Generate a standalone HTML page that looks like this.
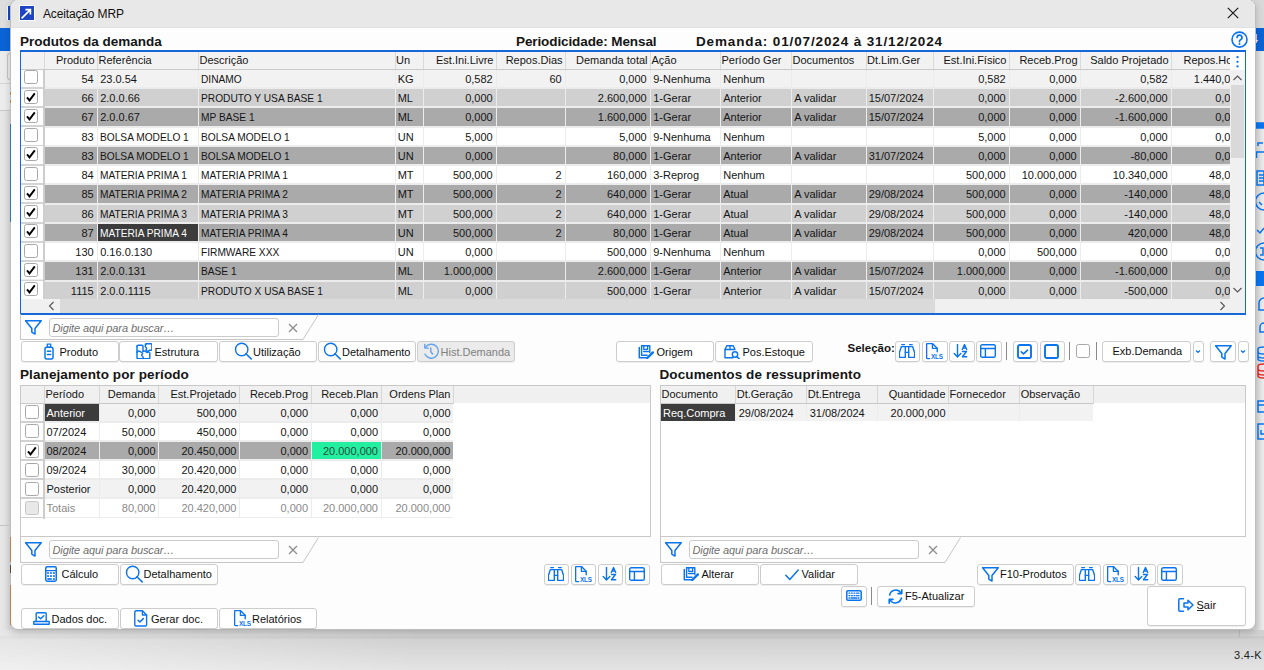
<!DOCTYPE html><html><head><meta charset="utf-8"><style>
html,body{margin:0;padding:0;width:1264px;height:670px;overflow:hidden;background:#e4e4e4;}
body{position:relative;font-family:"Liberation Sans",sans-serif;font-size:11px;color:#151515;}
div{position:absolute;box-sizing:border-box;}
.tx{white-space:nowrap;font-size:11px;}
.btn{border:1px solid #cdcdcd;border-radius:3px;box-shadow:0 1px 0 rgba(0,0,0,0.06);}
.hd{font-weight:bold;font-size:13.5px;color:#151515;letter-spacing:0.1px;}
.cell{height:17px;line-height:17px;white-space:nowrap;overflow:hidden;font-size:11px;}
.r{text-align:right;}
.cap span{display:inline-block;transform:scaleX(0.925);transform-origin:0 50%;}
.chk{width:14px;height:14px;border:1.3px solid #a8a8a8;border-radius:2.5px;background:#fff;}
</style></head><body>
<div style="left:0px;top:0px;width:1264px;height:670px;background:linear-gradient(#dadada 0,#e2e2e2 628px,#d0d0d0 630px,#d2d2d2 636px,#c4c4c4 637px,#d0d0d0 639px,#e4e4e4 670px);"></div>
<div style="left:1239px;top:630px;width:1px;height:7px;background:#bdbdbd;"></div>
<div style="left:0px;top:629px;width:420px;height:41px;background:linear-gradient(90deg,rgba(255,255,255,.45),rgba(255,255,255,0));"></div>
<div style="left:0px;top:0px;width:11px;height:28px;background:#dedede;"></div>
<div style="left:7px;top:6px;width:5px;height:14px;background:#1a46c2;border-left:1px solid #fff;"></div>
<div style="left:0px;top:28px;width:11px;height:23px;background:#0b64d6;"></div>
<div style="left:0px;top:51px;width:11px;height:60px;background:#ececec;"></div>
<div style="left:7px;top:53px;width:5px;height:27px;border:1px solid #c4c4c4;border-right:none;border-radius:3px 0 0 3px;"></div>
<div style="left:0px;top:83px;width:11px;height:1px;background:#d4d4d4;"></div>
<div style="left:0px;top:110px;width:11px;height:1px;background:#c8c8c8;"></div>
<div style="left:0px;top:111px;width:11px;height:519px;background:linear-gradient(90deg,#e8e8e8,#dcdcdc);"></div>
<div style="left:1255px;top:0px;width:9px;height:28px;background:#d8d8d8;"></div>
<div style="left:1255px;top:28px;width:9px;height:23px;background:#0b64d6;"></div>
<div style="left:1255px;top:28px;width:9px;height:23px;overflow:hidden;"><div class="tx" style="left:-4px;top:3px;height:17px;line-height:17px;color:#fff;font-size:12px;font-weight:bold;">4</div></div>
<div style="left:1255px;top:51px;width:9px;height:579px;background:linear-gradient(90deg,#d4d4d4,#ececec);"></div>
<svg style="position:absolute;left:1255px;top:118px" width="9" height="330" viewBox="0 0 9 330" fill="none" stroke="#0a74ee" stroke-width="1.5">
<path d="M1 5h8v5H1z" fill="#0a74ee"/>
<path d="M3 28v-3h5M1.5 40v-6h7.5" />
<path d="M2 53h7v14H2zM4 57h5M4 60h5M4 63h5"/>
<path d="M9 75a8 8 0 0 0 0 17" /><path d="M4 84l3 3"/>
<path d="M2 112l3 3 4-5"/>
<path d="M9 125a8 8 0 0 0 0 17M5 130h3v7H5"/>
<rect x="1" y="153" width="8" height="15" fill="#0a74ee" stroke="none"/>
<path d="M9 180a5 5 0 0 0 -5 5v7h5M9 205a4 4 0 0 0 -4 4v5h4"/>
<path d="M9 229c-4 0-6 1-6 2v10c0 1 2 2 6 2M3 234c0 1 2 2 6 2M3 238c0 1 2 2 6 2"/>
<path d="M9 246c-4 0-6 1-6 2v10c0 1 2 2 6 2M3 251c0 1 2 2 6 2M3 255c0 1 2 2 6 2" stroke="#e52424"/>
<path d="M9 283H3v11h6M3 287h6"/>
<path d="M9 306H3v15h6M6 312v4h3"/>
</svg>
<div class="tx" style="left:1234px;top:646.5px;height:17px;line-height:17px;color:#222;letter-spacing:0.3px;">3.4-K</div>
<div style="left:10px;top:-1px;width:1246px;height:631px;border-radius:8px;background:#fdfdfd;border:1px solid #bdbdbd;box-shadow:0 3px 7px rgba(0,0,0,0.18);"></div>
<div style="left:10px;top:124px;width:1px;height:98px;background:#2a78c8;"></div>
<div style="left:0px;top:525px;width:10px;height:1px;background:#c2c2c2;"></div>
<div style="left:10px;top:537px;width:1px;height:25px;background:#c8804a;"></div>
<div style="left:10px;top:565px;width:1px;height:8px;background:#5a4a3a;"></div>
<div style="left:10px;top:585px;width:1px;height:40px;background:#c8804a;"></div>
<div style="left:10px;top:92px;width:1px;height:3px;background:#c8804a;"></div>
<div style="left:10px;top:100px;width:1px;height:3px;background:#c8804a;"></div>
<div style="left:11px;top:0px;width:1244px;height:28px;background:#e8e8e8;border-radius:7px 7px 0 0;border-bottom:1px solid #e1e1e1;"></div>
<div style="left:20px;top:6px;width:14px;height:14px;background:#1f44c0;outline:1px solid #fff;"></div>
<svg style="position:absolute;left:20px;top:6px" width="14" height="14" viewBox="0 0 14 14"><path d="M1.6 12.4L10.2 3.8M5.4 3.6h5v5" stroke="#fff" stroke-width="1.7" fill="none"/></svg>
<div class="tx" style="left:43px;top:6px;height:17px;line-height:17px;font-size:12px;color:#111;letter-spacing:-0.15px;">Aceitação MRP</div>
<svg style="position:absolute;left:1227px;top:7px" width="12" height="12" viewBox="0 0 12 12"><path d="M0.8 0.8L11.2 11.2M11.2 0.8L0.8 11.2" stroke="#1a1a1a" stroke-width="1.2"/></svg>
<div class="tx hd" style="left:20px;top:32.7px;height:17px;line-height:17px;letter-spacing:0px;">Produtos da demanda</div>
<div class="tx hd" style="left:516px;top:32.7px;height:17px;line-height:17px;letter-spacing:-0.1px;">Periodicidade: Mensal</div>
<div class="tx hd" style="left:696px;top:32.7px;height:17px;line-height:17px;letter-spacing:0.87px;">Demanda: 01/07/2024 à 31/12/2024</div>
<svg style="position:absolute;left:1230.5px;top:30.5px" width="17" height="17" viewBox="0 0 17 17"><circle cx="8.5" cy="8.6" r="7.5" stroke="#0a74ee" stroke-width="1.6" fill="#fff"/><path d="M6.1 6.5a2.45 2.45 0 1 1 3.5 2.2c-.75.35-1.1.8-1.1 1.6v.4" stroke="#0a74ee" stroke-width="1.7" fill="none" stroke-linecap="round"/><circle cx="8.5" cy="12.9" r="1" fill="#0a74ee"/></svg>
<div style="left:20px;top:50px;width:1226px;height:265px;background:#fff;border:1px solid #1668d8;border-top-width:2px;border-bottom-width:2px;"></div>
<div style="left:21px;top:52px;width:1209px;height:17px;background:#f2f2f2;"></div>
<div style="left:21px;top:69px;width:1209px;height:1px;background:#c9c9c9;"></div>
<div style="left:44px;top:52px;width:1px;height:17px;background:#dadada;"></div>
<div style="left:97px;top:52px;width:1px;height:17px;background:#dadada;"></div>
<div style="left:198px;top:52px;width:1px;height:17px;background:#dadada;"></div>
<div style="left:394.5px;top:52px;width:1px;height:17px;background:#dadada;"></div>
<div style="left:422.6px;top:52px;width:1px;height:17px;background:#dadada;"></div>
<div style="left:496px;top:52px;width:1px;height:17px;background:#dadada;"></div>
<div style="left:565px;top:52px;width:1px;height:17px;background:#dadada;"></div>
<div style="left:650px;top:52px;width:1px;height:17px;background:#dadada;"></div>
<div style="left:720px;top:52px;width:1px;height:17px;background:#dadada;"></div>
<div style="left:791px;top:52px;width:1px;height:17px;background:#dadada;"></div>
<div style="left:865.5px;top:52px;width:1px;height:17px;background:#dadada;"></div>
<div style="left:933px;top:52px;width:1px;height:17px;background:#dadada;"></div>
<div style="left:1009px;top:52px;width:1px;height:17px;background:#dadada;"></div>
<div style="left:1080px;top:52px;width:1px;height:17px;background:#dadada;"></div>
<div style="left:1171px;top:52px;width:1px;height:17px;background:#dadada;"></div>
<div class="cell r" style="left:44px;top:52px;width:53px;padding:0 2.5px 0 1.5px;">Produto</div>
<div class="cell " style="left:97px;top:52px;width:101px;padding:0 2.5px 0 1.5px;">Referência</div>
<div class="cell " style="left:198px;top:52px;width:196.5px;padding:0 2.5px 0 1.5px;">Descrição</div>
<div class="cell " style="left:394.5px;top:52px;width:28.100000000000023px;padding:0 2.5px 0 1.5px;">Un</div>
<div class="cell r" style="left:422.6px;top:52px;width:73.39999999999998px;padding:0 2.5px 0 1.5px;">Est.Ini.Livre</div>
<div class="cell r" style="left:496px;top:52px;width:69px;padding:0 2.5px 0 1.5px;">Repos.Dias</div>
<div class="cell r" style="left:565px;top:52px;width:85px;padding:0 2.5px 0 1.5px;">Demanda total</div>
<div class="cell " style="left:650px;top:52px;width:70px;padding:0 2.5px 0 1.5px;">Ação</div>
<div class="cell " style="left:720px;top:52px;width:71px;padding:0 2.5px 0 1.5px;">Período Ger</div>
<div class="cell " style="left:791px;top:52px;width:74.5px;padding:0 2.5px 0 1.5px;">Documentos</div>
<div class="cell " style="left:865.5px;top:52px;width:67.5px;padding:0 2.5px 0 1.5px;">Dt.Lim.Ger</div>
<div class="cell r" style="left:933px;top:52px;width:76px;padding:0 2.5px 0 1.5px;">Est.Ini.Físico</div>
<div class="cell r" style="left:1009px;top:52px;width:71px;padding:0 2.5px 0 1.5px;">Receb.Prog</div>
<div class="cell r" style="left:1080px;top:52px;width:91px;padding:0 2.5px 0 1.5px;">Saldo Projetado</div>
<div class="cell" style="left:1171px;top:52px;width:59px;padding:0 0 0 12.5px;">Repos.Horizonte</div>
<div style="left:1230px;top:52px;width:15px;height:18px;background:#fff;"></div>
<svg style="position:absolute;left:1235px;top:55px" width="5" height="14" viewBox="0 0 5 14"><circle cx="2.5" cy="2.2" r="1.15" fill="#0a74ee"/><circle cx="2.5" cy="6.8" r="1.15" fill="#0a74ee"/><circle cx="2.5" cy="11.4" r="1.15" fill="#0a74ee"/></svg>
<div style="left:21px;top:70px;width:1209px;height:229px;overflow:hidden;background:#ececec;">
<div style="left:0;top:-0.60px;width:22px;height:17.4px;background:#fff;"></div>
<div class="cell r" style="left:24px;top:-0.30px;width:52px;height:17.3px;background:#f2f2f2;padding:1px 3.3px 0 2px;">54</div>
<div class="cell " style="left:77px;top:-0.30px;width:100px;height:17.3px;background:#f2f2f2;padding:1px 2.5px 0 2.2px;">23.0.54</div>
<div class="cell  cap" style="left:178px;top:-0.30px;width:195.5px;height:17.3px;background:#f2f2f2;padding:1px 2.5px 0 2.2px;"><span>DINAMO</span></div>
<div class="cell " style="left:374.5px;top:-0.30px;width:27.100000000000023px;height:17.3px;background:#f2f2f2;padding:1px 2.5px 0 2.2px;">KG</div>
<div class="cell r" style="left:402.6px;top:-0.30px;width:72.39999999999998px;height:17.3px;background:#f2f2f2;padding:1px 3.3px 0 2px;">0,582</div>
<div class="cell r" style="left:476px;top:-0.30px;width:68px;height:17.3px;background:#f2f2f2;padding:1px 3.3px 0 2px;">60</div>
<div class="cell r" style="left:545px;top:-0.30px;width:84px;height:17.3px;background:#f2f2f2;padding:1px 3.3px 0 2px;">0,000</div>
<div class="cell " style="left:630px;top:-0.30px;width:69px;height:17.3px;background:#f2f2f2;padding:1px 2.5px 0 2.2px;">9-Nenhuma</div>
<div class="cell " style="left:700px;top:-0.30px;width:70px;height:17.3px;background:#f2f2f2;padding:1px 2.5px 0 2.2px;">Nenhum</div>
<div class="cell " style="left:771px;top:-0.30px;width:73.5px;height:17.3px;background:#f2f2f2;padding:1px 2.5px 0 2.2px;"></div>
<div class="cell " style="left:845.5px;top:-0.30px;width:66.5px;height:17.3px;background:#f2f2f2;padding:1px 2.5px 0 2.2px;"></div>
<div class="cell r" style="left:913px;top:-0.30px;width:75px;height:17.3px;background:#f2f2f2;padding:1px 3.3px 0 2px;">0,582</div>
<div class="cell r" style="left:989px;top:-0.30px;width:70px;height:17.3px;background:#f2f2f2;padding:1px 3.3px 0 2px;">0,000</div>
<div class="cell r" style="left:1060px;top:-0.30px;width:90px;height:17.3px;background:#f2f2f2;padding:1px 3.3px 0 2px;">0,582</div>
<div class="cell r" style="left:1151px;top:-0.30px;width:74px;height:17.3px;background:#f2f2f2;padding:1px 3.3px 0 2px;">1.440,000</div>
<div style="left:0;top:16.80px;width:22px;height:2px;background:#d4d4d4;"></div>
<div style="left:0;top:18.67px;width:22px;height:17.4px;background:#fff;"></div>
<div class="cell r" style="left:24px;top:18.97px;width:52px;height:17.3px;background:#d0d0d0;padding:1px 3.3px 0 2px;">66</div>
<div class="cell " style="left:77px;top:18.97px;width:100px;height:17.3px;background:#d0d0d0;padding:1px 2.5px 0 2.2px;">2.0.0.66</div>
<div class="cell  cap" style="left:178px;top:18.97px;width:195.5px;height:17.3px;background:#d0d0d0;padding:1px 2.5px 0 2.2px;"><span>PRODUTO Y USA BASE 1</span></div>
<div class="cell " style="left:374.5px;top:18.97px;width:27.100000000000023px;height:17.3px;background:#d0d0d0;padding:1px 2.5px 0 2.2px;">ML</div>
<div class="cell r" style="left:402.6px;top:18.97px;width:72.39999999999998px;height:17.3px;background:#d0d0d0;padding:1px 3.3px 0 2px;">0,000</div>
<div class="cell r" style="left:476px;top:18.97px;width:68px;height:17.3px;background:#d0d0d0;padding:1px 3.3px 0 2px;"></div>
<div class="cell r" style="left:545px;top:18.97px;width:84px;height:17.3px;background:#d0d0d0;padding:1px 3.3px 0 2px;">2.600,000</div>
<div class="cell " style="left:630px;top:18.97px;width:69px;height:17.3px;background:#d0d0d0;padding:1px 2.5px 0 2.2px;">1-Gerar</div>
<div class="cell " style="left:700px;top:18.97px;width:70px;height:17.3px;background:#d0d0d0;padding:1px 2.5px 0 2.2px;">Anterior</div>
<div class="cell " style="left:771px;top:18.97px;width:73.5px;height:17.3px;background:#d0d0d0;padding:1px 2.5px 0 2.2px;">A validar</div>
<div class="cell " style="left:845.5px;top:18.97px;width:66.5px;height:17.3px;background:#d0d0d0;padding:1px 2.5px 0 2.2px;">15/07/2024</div>
<div class="cell r" style="left:913px;top:18.97px;width:75px;height:17.3px;background:#d0d0d0;padding:1px 3.3px 0 2px;">0,000</div>
<div class="cell r" style="left:989px;top:18.97px;width:70px;height:17.3px;background:#d0d0d0;padding:1px 3.3px 0 2px;">0,000</div>
<div class="cell r" style="left:1060px;top:18.97px;width:90px;height:17.3px;background:#d0d0d0;padding:1px 3.3px 0 2px;">-2.600,000</div>
<div class="cell r" style="left:1151px;top:18.97px;width:74px;height:17.3px;background:#d0d0d0;padding:1px 3.3px 0 2px;">0,000</div>
<div style="left:0;top:36.07px;width:22px;height:2px;background:#d4d4d4;"></div>
<div style="left:0;top:37.94px;width:22px;height:17.4px;background:#fff;"></div>
<div class="cell r" style="left:24px;top:38.24px;width:52px;height:17.3px;background:#aaaaaa;padding:1px 3.3px 0 2px;">67</div>
<div class="cell " style="left:77px;top:38.24px;width:100px;height:17.3px;background:#aaaaaa;padding:1px 2.5px 0 2.2px;">2.0.0.67</div>
<div class="cell  cap" style="left:178px;top:38.24px;width:195.5px;height:17.3px;background:#aaaaaa;padding:1px 2.5px 0 2.2px;"><span>MP BASE 1</span></div>
<div class="cell " style="left:374.5px;top:38.24px;width:27.100000000000023px;height:17.3px;background:#aaaaaa;padding:1px 2.5px 0 2.2px;">ML</div>
<div class="cell r" style="left:402.6px;top:38.24px;width:72.39999999999998px;height:17.3px;background:#aaaaaa;padding:1px 3.3px 0 2px;">0,000</div>
<div class="cell r" style="left:476px;top:38.24px;width:68px;height:17.3px;background:#aaaaaa;padding:1px 3.3px 0 2px;"></div>
<div class="cell r" style="left:545px;top:38.24px;width:84px;height:17.3px;background:#aaaaaa;padding:1px 3.3px 0 2px;">1.600,000</div>
<div class="cell " style="left:630px;top:38.24px;width:69px;height:17.3px;background:#aaaaaa;padding:1px 2.5px 0 2.2px;">1-Gerar</div>
<div class="cell " style="left:700px;top:38.24px;width:70px;height:17.3px;background:#aaaaaa;padding:1px 2.5px 0 2.2px;">Anterior</div>
<div class="cell " style="left:771px;top:38.24px;width:73.5px;height:17.3px;background:#aaaaaa;padding:1px 2.5px 0 2.2px;">A validar</div>
<div class="cell " style="left:845.5px;top:38.24px;width:66.5px;height:17.3px;background:#aaaaaa;padding:1px 2.5px 0 2.2px;">15/07/2024</div>
<div class="cell r" style="left:913px;top:38.24px;width:75px;height:17.3px;background:#aaaaaa;padding:1px 3.3px 0 2px;">0,000</div>
<div class="cell r" style="left:989px;top:38.24px;width:70px;height:17.3px;background:#aaaaaa;padding:1px 3.3px 0 2px;">0,000</div>
<div class="cell r" style="left:1060px;top:38.24px;width:90px;height:17.3px;background:#aaaaaa;padding:1px 3.3px 0 2px;">-1.600,000</div>
<div class="cell r" style="left:1151px;top:38.24px;width:74px;height:17.3px;background:#aaaaaa;padding:1px 3.3px 0 2px;">0,000</div>
<div style="left:0;top:55.34px;width:22px;height:2px;background:#d4d4d4;"></div>
<div style="left:0;top:57.21px;width:22px;height:17.4px;background:#fff;"></div>
<div class="cell r" style="left:24px;top:57.51px;width:52px;height:17.3px;background:#ffffff;padding:1px 3.3px 0 2px;">83</div>
<div class="cell  cap" style="left:77px;top:57.51px;width:100px;height:17.3px;background:#ffffff;padding:1px 2.5px 0 2.2px;"><span>BOLSA MODELO 1</span></div>
<div class="cell  cap" style="left:178px;top:57.51px;width:195.5px;height:17.3px;background:#ffffff;padding:1px 2.5px 0 2.2px;"><span>BOLSA MODELO 1</span></div>
<div class="cell " style="left:374.5px;top:57.51px;width:27.100000000000023px;height:17.3px;background:#ffffff;padding:1px 2.5px 0 2.2px;">UN</div>
<div class="cell r" style="left:402.6px;top:57.51px;width:72.39999999999998px;height:17.3px;background:#ffffff;padding:1px 3.3px 0 2px;">5,000</div>
<div class="cell r" style="left:476px;top:57.51px;width:68px;height:17.3px;background:#ffffff;padding:1px 3.3px 0 2px;"></div>
<div class="cell r" style="left:545px;top:57.51px;width:84px;height:17.3px;background:#ffffff;padding:1px 3.3px 0 2px;">5,000</div>
<div class="cell " style="left:630px;top:57.51px;width:69px;height:17.3px;background:#ffffff;padding:1px 2.5px 0 2.2px;">9-Nenhuma</div>
<div class="cell " style="left:700px;top:57.51px;width:70px;height:17.3px;background:#ffffff;padding:1px 2.5px 0 2.2px;">Nenhum</div>
<div class="cell " style="left:771px;top:57.51px;width:73.5px;height:17.3px;background:#ffffff;padding:1px 2.5px 0 2.2px;"></div>
<div class="cell " style="left:845.5px;top:57.51px;width:66.5px;height:17.3px;background:#ffffff;padding:1px 2.5px 0 2.2px;"></div>
<div class="cell r" style="left:913px;top:57.51px;width:75px;height:17.3px;background:#ffffff;padding:1px 3.3px 0 2px;">5,000</div>
<div class="cell r" style="left:989px;top:57.51px;width:70px;height:17.3px;background:#ffffff;padding:1px 3.3px 0 2px;">0,000</div>
<div class="cell r" style="left:1060px;top:57.51px;width:90px;height:17.3px;background:#ffffff;padding:1px 3.3px 0 2px;">0,000</div>
<div class="cell r" style="left:1151px;top:57.51px;width:74px;height:17.3px;background:#ffffff;padding:1px 3.3px 0 2px;">0,000</div>
<div style="left:0;top:74.61px;width:22px;height:2px;background:#d4d4d4;"></div>
<div style="left:0;top:76.48px;width:22px;height:17.4px;background:#fff;"></div>
<div class="cell r" style="left:24px;top:76.78px;width:52px;height:17.3px;background:#aaaaaa;padding:1px 3.3px 0 2px;">83</div>
<div class="cell  cap" style="left:77px;top:76.78px;width:100px;height:17.3px;background:#aaaaaa;padding:1px 2.5px 0 2.2px;"><span>BOLSA MODELO 1</span></div>
<div class="cell  cap" style="left:178px;top:76.78px;width:195.5px;height:17.3px;background:#aaaaaa;padding:1px 2.5px 0 2.2px;"><span>BOLSA MODELO 1</span></div>
<div class="cell " style="left:374.5px;top:76.78px;width:27.100000000000023px;height:17.3px;background:#aaaaaa;padding:1px 2.5px 0 2.2px;">UN</div>
<div class="cell r" style="left:402.6px;top:76.78px;width:72.39999999999998px;height:17.3px;background:#aaaaaa;padding:1px 3.3px 0 2px;">0,000</div>
<div class="cell r" style="left:476px;top:76.78px;width:68px;height:17.3px;background:#aaaaaa;padding:1px 3.3px 0 2px;"></div>
<div class="cell r" style="left:545px;top:76.78px;width:84px;height:17.3px;background:#aaaaaa;padding:1px 3.3px 0 2px;">80,000</div>
<div class="cell " style="left:630px;top:76.78px;width:69px;height:17.3px;background:#aaaaaa;padding:1px 2.5px 0 2.2px;">1-Gerar</div>
<div class="cell " style="left:700px;top:76.78px;width:70px;height:17.3px;background:#aaaaaa;padding:1px 2.5px 0 2.2px;">Anterior</div>
<div class="cell " style="left:771px;top:76.78px;width:73.5px;height:17.3px;background:#aaaaaa;padding:1px 2.5px 0 2.2px;">A validar</div>
<div class="cell " style="left:845.5px;top:76.78px;width:66.5px;height:17.3px;background:#aaaaaa;padding:1px 2.5px 0 2.2px;">31/07/2024</div>
<div class="cell r" style="left:913px;top:76.78px;width:75px;height:17.3px;background:#aaaaaa;padding:1px 3.3px 0 2px;">0,000</div>
<div class="cell r" style="left:989px;top:76.78px;width:70px;height:17.3px;background:#aaaaaa;padding:1px 3.3px 0 2px;">0,000</div>
<div class="cell r" style="left:1060px;top:76.78px;width:90px;height:17.3px;background:#aaaaaa;padding:1px 3.3px 0 2px;">-80,000</div>
<div class="cell r" style="left:1151px;top:76.78px;width:74px;height:17.3px;background:#aaaaaa;padding:1px 3.3px 0 2px;">0,000</div>
<div style="left:0;top:93.88px;width:22px;height:2px;background:#d4d4d4;"></div>
<div style="left:0;top:95.75px;width:22px;height:17.4px;background:#fff;"></div>
<div class="cell r" style="left:24px;top:96.05px;width:52px;height:17.3px;background:#ffffff;padding:1px 3.3px 0 2px;">84</div>
<div class="cell  cap" style="left:77px;top:96.05px;width:100px;height:17.3px;background:#ffffff;padding:1px 2.5px 0 2.2px;"><span>MATERIA PRIMA 1</span></div>
<div class="cell  cap" style="left:178px;top:96.05px;width:195.5px;height:17.3px;background:#ffffff;padding:1px 2.5px 0 2.2px;"><span>MATERIA PRIMA 1</span></div>
<div class="cell " style="left:374.5px;top:96.05px;width:27.100000000000023px;height:17.3px;background:#ffffff;padding:1px 2.5px 0 2.2px;">MT</div>
<div class="cell r" style="left:402.6px;top:96.05px;width:72.39999999999998px;height:17.3px;background:#ffffff;padding:1px 3.3px 0 2px;">500,000</div>
<div class="cell r" style="left:476px;top:96.05px;width:68px;height:17.3px;background:#ffffff;padding:1px 3.3px 0 2px;">2</div>
<div class="cell r" style="left:545px;top:96.05px;width:84px;height:17.3px;background:#ffffff;padding:1px 3.3px 0 2px;">160,000</div>
<div class="cell " style="left:630px;top:96.05px;width:69px;height:17.3px;background:#ffffff;padding:1px 2.5px 0 2.2px;">3-Reprog</div>
<div class="cell " style="left:700px;top:96.05px;width:70px;height:17.3px;background:#ffffff;padding:1px 2.5px 0 2.2px;">Nenhum</div>
<div class="cell " style="left:771px;top:96.05px;width:73.5px;height:17.3px;background:#ffffff;padding:1px 2.5px 0 2.2px;"></div>
<div class="cell " style="left:845.5px;top:96.05px;width:66.5px;height:17.3px;background:#ffffff;padding:1px 2.5px 0 2.2px;"></div>
<div class="cell r" style="left:913px;top:96.05px;width:75px;height:17.3px;background:#ffffff;padding:1px 3.3px 0 2px;">500,000</div>
<div class="cell r" style="left:989px;top:96.05px;width:70px;height:17.3px;background:#ffffff;padding:1px 3.3px 0 2px;">10.000,000</div>
<div class="cell r" style="left:1060px;top:96.05px;width:90px;height:17.3px;background:#ffffff;padding:1px 3.3px 0 2px;">10.340,000</div>
<div class="cell r" style="left:1151px;top:96.05px;width:74px;height:17.3px;background:#ffffff;padding:1px 3.3px 0 2px;">48,000</div>
<div style="left:0;top:113.15px;width:22px;height:2px;background:#d4d4d4;"></div>
<div style="left:0;top:115.02px;width:22px;height:17.4px;background:#fff;"></div>
<div class="cell r" style="left:24px;top:115.32px;width:52px;height:17.3px;background:#aaaaaa;padding:1px 3.3px 0 2px;">85</div>
<div class="cell  cap" style="left:77px;top:115.32px;width:100px;height:17.3px;background:#aaaaaa;padding:1px 2.5px 0 2.2px;"><span>MATERIA PRIMA 2</span></div>
<div class="cell  cap" style="left:178px;top:115.32px;width:195.5px;height:17.3px;background:#aaaaaa;padding:1px 2.5px 0 2.2px;"><span>MATERIA PRIMA 2</span></div>
<div class="cell " style="left:374.5px;top:115.32px;width:27.100000000000023px;height:17.3px;background:#aaaaaa;padding:1px 2.5px 0 2.2px;">MT</div>
<div class="cell r" style="left:402.6px;top:115.32px;width:72.39999999999998px;height:17.3px;background:#aaaaaa;padding:1px 3.3px 0 2px;">500,000</div>
<div class="cell r" style="left:476px;top:115.32px;width:68px;height:17.3px;background:#aaaaaa;padding:1px 3.3px 0 2px;">2</div>
<div class="cell r" style="left:545px;top:115.32px;width:84px;height:17.3px;background:#aaaaaa;padding:1px 3.3px 0 2px;">640,000</div>
<div class="cell " style="left:630px;top:115.32px;width:69px;height:17.3px;background:#aaaaaa;padding:1px 2.5px 0 2.2px;">1-Gerar</div>
<div class="cell " style="left:700px;top:115.32px;width:70px;height:17.3px;background:#aaaaaa;padding:1px 2.5px 0 2.2px;">Atual</div>
<div class="cell " style="left:771px;top:115.32px;width:73.5px;height:17.3px;background:#aaaaaa;padding:1px 2.5px 0 2.2px;">A validar</div>
<div class="cell " style="left:845.5px;top:115.32px;width:66.5px;height:17.3px;background:#aaaaaa;padding:1px 2.5px 0 2.2px;">29/08/2024</div>
<div class="cell r" style="left:913px;top:115.32px;width:75px;height:17.3px;background:#aaaaaa;padding:1px 3.3px 0 2px;">500,000</div>
<div class="cell r" style="left:989px;top:115.32px;width:70px;height:17.3px;background:#aaaaaa;padding:1px 3.3px 0 2px;">0,000</div>
<div class="cell r" style="left:1060px;top:115.32px;width:90px;height:17.3px;background:#aaaaaa;padding:1px 3.3px 0 2px;">-140,000</div>
<div class="cell r" style="left:1151px;top:115.32px;width:74px;height:17.3px;background:#aaaaaa;padding:1px 3.3px 0 2px;">48,000</div>
<div style="left:0;top:132.42px;width:22px;height:2px;background:#d4d4d4;"></div>
<div style="left:0;top:134.29px;width:22px;height:17.4px;background:#fff;"></div>
<div class="cell r" style="left:24px;top:134.59px;width:52px;height:17.3px;background:#d0d0d0;padding:1px 3.3px 0 2px;">86</div>
<div class="cell  cap" style="left:77px;top:134.59px;width:100px;height:17.3px;background:#d0d0d0;padding:1px 2.5px 0 2.2px;"><span>MATERIA PRIMA 3</span></div>
<div class="cell  cap" style="left:178px;top:134.59px;width:195.5px;height:17.3px;background:#d0d0d0;padding:1px 2.5px 0 2.2px;"><span>MATERIA PRIMA 3</span></div>
<div class="cell " style="left:374.5px;top:134.59px;width:27.100000000000023px;height:17.3px;background:#d0d0d0;padding:1px 2.5px 0 2.2px;">MT</div>
<div class="cell r" style="left:402.6px;top:134.59px;width:72.39999999999998px;height:17.3px;background:#d0d0d0;padding:1px 3.3px 0 2px;">500,000</div>
<div class="cell r" style="left:476px;top:134.59px;width:68px;height:17.3px;background:#d0d0d0;padding:1px 3.3px 0 2px;">2</div>
<div class="cell r" style="left:545px;top:134.59px;width:84px;height:17.3px;background:#d0d0d0;padding:1px 3.3px 0 2px;">640,000</div>
<div class="cell " style="left:630px;top:134.59px;width:69px;height:17.3px;background:#d0d0d0;padding:1px 2.5px 0 2.2px;">1-Gerar</div>
<div class="cell " style="left:700px;top:134.59px;width:70px;height:17.3px;background:#d0d0d0;padding:1px 2.5px 0 2.2px;">Atual</div>
<div class="cell " style="left:771px;top:134.59px;width:73.5px;height:17.3px;background:#d0d0d0;padding:1px 2.5px 0 2.2px;">A validar</div>
<div class="cell " style="left:845.5px;top:134.59px;width:66.5px;height:17.3px;background:#d0d0d0;padding:1px 2.5px 0 2.2px;">29/08/2024</div>
<div class="cell r" style="left:913px;top:134.59px;width:75px;height:17.3px;background:#d0d0d0;padding:1px 3.3px 0 2px;">500,000</div>
<div class="cell r" style="left:989px;top:134.59px;width:70px;height:17.3px;background:#d0d0d0;padding:1px 3.3px 0 2px;">0,000</div>
<div class="cell r" style="left:1060px;top:134.59px;width:90px;height:17.3px;background:#d0d0d0;padding:1px 3.3px 0 2px;">-140,000</div>
<div class="cell r" style="left:1151px;top:134.59px;width:74px;height:17.3px;background:#d0d0d0;padding:1px 3.3px 0 2px;">48,000</div>
<div style="left:0;top:151.69px;width:22px;height:2px;background:#d4d4d4;"></div>
<div style="left:0;top:153.56px;width:22px;height:17.4px;background:#fff;"></div>
<div class="cell r" style="left:24px;top:153.86px;width:52px;height:17.3px;background:#aaaaaa;padding:1px 3.3px 0 2px;">87</div>
<div class="cell  cap" style="left:77px;top:153.86px;width:100px;height:17.3px;background:#aaaaaa;background:#3c3c3c;color:#fff;padding:1px 2.5px 0 2.2px;"><span>MATERIA PRIMA 4</span></div>
<div class="cell  cap" style="left:178px;top:153.86px;width:195.5px;height:17.3px;background:#aaaaaa;padding:1px 2.5px 0 2.2px;"><span>MATERIA PRIMA 4</span></div>
<div class="cell " style="left:374.5px;top:153.86px;width:27.100000000000023px;height:17.3px;background:#aaaaaa;padding:1px 2.5px 0 2.2px;">UN</div>
<div class="cell r" style="left:402.6px;top:153.86px;width:72.39999999999998px;height:17.3px;background:#aaaaaa;padding:1px 3.3px 0 2px;">500,000</div>
<div class="cell r" style="left:476px;top:153.86px;width:68px;height:17.3px;background:#aaaaaa;padding:1px 3.3px 0 2px;">2</div>
<div class="cell r" style="left:545px;top:153.86px;width:84px;height:17.3px;background:#aaaaaa;padding:1px 3.3px 0 2px;">80,000</div>
<div class="cell " style="left:630px;top:153.86px;width:69px;height:17.3px;background:#aaaaaa;padding:1px 2.5px 0 2.2px;">1-Gerar</div>
<div class="cell " style="left:700px;top:153.86px;width:70px;height:17.3px;background:#aaaaaa;padding:1px 2.5px 0 2.2px;">Atual</div>
<div class="cell " style="left:771px;top:153.86px;width:73.5px;height:17.3px;background:#aaaaaa;padding:1px 2.5px 0 2.2px;">A validar</div>
<div class="cell " style="left:845.5px;top:153.86px;width:66.5px;height:17.3px;background:#aaaaaa;padding:1px 2.5px 0 2.2px;">29/08/2024</div>
<div class="cell r" style="left:913px;top:153.86px;width:75px;height:17.3px;background:#aaaaaa;padding:1px 3.3px 0 2px;">500,000</div>
<div class="cell r" style="left:989px;top:153.86px;width:70px;height:17.3px;background:#aaaaaa;padding:1px 3.3px 0 2px;">0,000</div>
<div class="cell r" style="left:1060px;top:153.86px;width:90px;height:17.3px;background:#aaaaaa;padding:1px 3.3px 0 2px;">420,000</div>
<div class="cell r" style="left:1151px;top:153.86px;width:74px;height:17.3px;background:#aaaaaa;padding:1px 3.3px 0 2px;">48,000</div>
<div style="left:0;top:170.96px;width:22px;height:2px;background:#d4d4d4;"></div>
<div style="left:0;top:172.83px;width:22px;height:17.4px;background:#fff;"></div>
<div class="cell r" style="left:24px;top:173.13px;width:52px;height:17.3px;background:#ffffff;padding:1px 3.3px 0 2px;">130</div>
<div class="cell " style="left:77px;top:173.13px;width:100px;height:17.3px;background:#ffffff;padding:1px 2.5px 0 2.2px;">0.16.0.130</div>
<div class="cell  cap" style="left:178px;top:173.13px;width:195.5px;height:17.3px;background:#ffffff;padding:1px 2.5px 0 2.2px;"><span>FIRMWARE XXX</span></div>
<div class="cell " style="left:374.5px;top:173.13px;width:27.100000000000023px;height:17.3px;background:#ffffff;padding:1px 2.5px 0 2.2px;">UN</div>
<div class="cell r" style="left:402.6px;top:173.13px;width:72.39999999999998px;height:17.3px;background:#ffffff;padding:1px 3.3px 0 2px;">0,000</div>
<div class="cell r" style="left:476px;top:173.13px;width:68px;height:17.3px;background:#ffffff;padding:1px 3.3px 0 2px;"></div>
<div class="cell r" style="left:545px;top:173.13px;width:84px;height:17.3px;background:#ffffff;padding:1px 3.3px 0 2px;">500,000</div>
<div class="cell " style="left:630px;top:173.13px;width:69px;height:17.3px;background:#ffffff;padding:1px 2.5px 0 2.2px;">9-Nenhuma</div>
<div class="cell " style="left:700px;top:173.13px;width:70px;height:17.3px;background:#ffffff;padding:1px 2.5px 0 2.2px;">Nenhum</div>
<div class="cell " style="left:771px;top:173.13px;width:73.5px;height:17.3px;background:#ffffff;padding:1px 2.5px 0 2.2px;"></div>
<div class="cell " style="left:845.5px;top:173.13px;width:66.5px;height:17.3px;background:#ffffff;padding:1px 2.5px 0 2.2px;"></div>
<div class="cell r" style="left:913px;top:173.13px;width:75px;height:17.3px;background:#ffffff;padding:1px 3.3px 0 2px;">0,000</div>
<div class="cell r" style="left:989px;top:173.13px;width:70px;height:17.3px;background:#ffffff;padding:1px 3.3px 0 2px;">500,000</div>
<div class="cell r" style="left:1060px;top:173.13px;width:90px;height:17.3px;background:#ffffff;padding:1px 3.3px 0 2px;">0,000</div>
<div class="cell r" style="left:1151px;top:173.13px;width:74px;height:17.3px;background:#ffffff;padding:1px 3.3px 0 2px;">0,000</div>
<div style="left:0;top:190.23px;width:22px;height:2px;background:#d4d4d4;"></div>
<div style="left:0;top:192.10px;width:22px;height:17.4px;background:#fff;"></div>
<div class="cell r" style="left:24px;top:192.40px;width:52px;height:17.3px;background:#aaaaaa;padding:1px 3.3px 0 2px;">131</div>
<div class="cell " style="left:77px;top:192.40px;width:100px;height:17.3px;background:#aaaaaa;padding:1px 2.5px 0 2.2px;">2.0.0.131</div>
<div class="cell  cap" style="left:178px;top:192.40px;width:195.5px;height:17.3px;background:#aaaaaa;padding:1px 2.5px 0 2.2px;"><span>BASE 1</span></div>
<div class="cell " style="left:374.5px;top:192.40px;width:27.100000000000023px;height:17.3px;background:#aaaaaa;padding:1px 2.5px 0 2.2px;">ML</div>
<div class="cell r" style="left:402.6px;top:192.40px;width:72.39999999999998px;height:17.3px;background:#aaaaaa;padding:1px 3.3px 0 2px;">1.000,000</div>
<div class="cell r" style="left:476px;top:192.40px;width:68px;height:17.3px;background:#aaaaaa;padding:1px 3.3px 0 2px;"></div>
<div class="cell r" style="left:545px;top:192.40px;width:84px;height:17.3px;background:#aaaaaa;padding:1px 3.3px 0 2px;">2.600,000</div>
<div class="cell " style="left:630px;top:192.40px;width:69px;height:17.3px;background:#aaaaaa;padding:1px 2.5px 0 2.2px;">1-Gerar</div>
<div class="cell " style="left:700px;top:192.40px;width:70px;height:17.3px;background:#aaaaaa;padding:1px 2.5px 0 2.2px;">Anterior</div>
<div class="cell " style="left:771px;top:192.40px;width:73.5px;height:17.3px;background:#aaaaaa;padding:1px 2.5px 0 2.2px;">A validar</div>
<div class="cell " style="left:845.5px;top:192.40px;width:66.5px;height:17.3px;background:#aaaaaa;padding:1px 2.5px 0 2.2px;">15/07/2024</div>
<div class="cell r" style="left:913px;top:192.40px;width:75px;height:17.3px;background:#aaaaaa;padding:1px 3.3px 0 2px;">1.000,000</div>
<div class="cell r" style="left:989px;top:192.40px;width:70px;height:17.3px;background:#aaaaaa;padding:1px 3.3px 0 2px;">0,000</div>
<div class="cell r" style="left:1060px;top:192.40px;width:90px;height:17.3px;background:#aaaaaa;padding:1px 3.3px 0 2px;">-1.600,000</div>
<div class="cell r" style="left:1151px;top:192.40px;width:74px;height:17.3px;background:#aaaaaa;padding:1px 3.3px 0 2px;">0,000</div>
<div style="left:0;top:209.50px;width:22px;height:2px;background:#d4d4d4;"></div>
<div style="left:0;top:211.37px;width:22px;height:17.4px;background:#fff;"></div>
<div class="cell r" style="left:24px;top:211.67px;width:52px;height:17.3px;background:#d0d0d0;padding:1px 3.3px 0 2px;">1115</div>
<div class="cell " style="left:77px;top:211.67px;width:100px;height:17.3px;background:#d0d0d0;padding:1px 2.5px 0 2.2px;">2.0.0.1115</div>
<div class="cell  cap" style="left:178px;top:211.67px;width:195.5px;height:17.3px;background:#d0d0d0;padding:1px 2.5px 0 2.2px;"><span>PRODUTO X USA BASE 1</span></div>
<div class="cell " style="left:374.5px;top:211.67px;width:27.100000000000023px;height:17.3px;background:#d0d0d0;padding:1px 2.5px 0 2.2px;">ML</div>
<div class="cell r" style="left:402.6px;top:211.67px;width:72.39999999999998px;height:17.3px;background:#d0d0d0;padding:1px 3.3px 0 2px;">0,000</div>
<div class="cell r" style="left:476px;top:211.67px;width:68px;height:17.3px;background:#d0d0d0;padding:1px 3.3px 0 2px;"></div>
<div class="cell r" style="left:545px;top:211.67px;width:84px;height:17.3px;background:#d0d0d0;padding:1px 3.3px 0 2px;">500,000</div>
<div class="cell " style="left:630px;top:211.67px;width:69px;height:17.3px;background:#d0d0d0;padding:1px 2.5px 0 2.2px;">1-Gerar</div>
<div class="cell " style="left:700px;top:211.67px;width:70px;height:17.3px;background:#d0d0d0;padding:1px 2.5px 0 2.2px;">Anterior</div>
<div class="cell " style="left:771px;top:211.67px;width:73.5px;height:17.3px;background:#d0d0d0;padding:1px 2.5px 0 2.2px;">A validar</div>
<div class="cell " style="left:845.5px;top:211.67px;width:66.5px;height:17.3px;background:#d0d0d0;padding:1px 2.5px 0 2.2px;">15/07/2024</div>
<div class="cell r" style="left:913px;top:211.67px;width:75px;height:17.3px;background:#d0d0d0;padding:1px 3.3px 0 2px;">0,000</div>
<div class="cell r" style="left:989px;top:211.67px;width:70px;height:17.3px;background:#d0d0d0;padding:1px 3.3px 0 2px;">0,000</div>
<div class="cell r" style="left:1060px;top:211.67px;width:90px;height:17.3px;background:#d0d0d0;padding:1px 3.3px 0 2px;">-500,000</div>
<div class="cell r" style="left:1151px;top:211.67px;width:74px;height:17.3px;background:#d0d0d0;padding:1px 3.3px 0 2px;">0,000</div>
<div style="left:0;top:228.77px;width:22px;height:2px;background:#d4d4d4;"></div>
</div>
<div style="left:43px;top:70px;width:2px;height:229px;background:#cdcdcd;"></div>
<div class="chk" style="left:24px;top:70.30px;"></div>
<div class="chk" style="left:24px;top:89.57px;"></div>
<svg style="position:absolute;left:24px;top:89.57px" width="14" height="14" viewBox="0 0 14 14"><path d="M3 7.4l2.5 3 5.3-7" stroke="#000" stroke-width="1.9" fill="none"/></svg>
<div class="chk" style="left:24px;top:108.84px;"></div>
<svg style="position:absolute;left:24px;top:108.84px" width="14" height="14" viewBox="0 0 14 14"><path d="M3 7.4l2.5 3 5.3-7" stroke="#000" stroke-width="1.9" fill="none"/></svg>
<div class="chk" style="left:24px;top:128.11px;"></div>
<div class="chk" style="left:24px;top:147.38px;"></div>
<svg style="position:absolute;left:24px;top:147.38px" width="14" height="14" viewBox="0 0 14 14"><path d="M3 7.4l2.5 3 5.3-7" stroke="#000" stroke-width="1.9" fill="none"/></svg>
<div class="chk" style="left:24px;top:166.65px;"></div>
<div class="chk" style="left:24px;top:185.92px;"></div>
<svg style="position:absolute;left:24px;top:185.92px" width="14" height="14" viewBox="0 0 14 14"><path d="M3 7.4l2.5 3 5.3-7" stroke="#000" stroke-width="1.9" fill="none"/></svg>
<div class="chk" style="left:24px;top:205.19px;"></div>
<svg style="position:absolute;left:24px;top:205.19px" width="14" height="14" viewBox="0 0 14 14"><path d="M3 7.4l2.5 3 5.3-7" stroke="#000" stroke-width="1.9" fill="none"/></svg>
<div class="chk" style="left:24px;top:224.46px;"></div>
<svg style="position:absolute;left:24px;top:224.46px" width="14" height="14" viewBox="0 0 14 14"><path d="M3 7.4l2.5 3 5.3-7" stroke="#000" stroke-width="1.9" fill="none"/></svg>
<div class="chk" style="left:24px;top:243.73px;"></div>
<div class="chk" style="left:24px;top:263.00px;"></div>
<svg style="position:absolute;left:24px;top:263.00px" width="14" height="14" viewBox="0 0 14 14"><path d="M3 7.4l2.5 3 5.3-7" stroke="#000" stroke-width="1.9" fill="none"/></svg>
<div class="chk" style="left:24px;top:282.27px;"></div>
<svg style="position:absolute;left:24px;top:282.27px" width="14" height="14" viewBox="0 0 14 14"><path d="M3 7.4l2.5 3 5.3-7" stroke="#000" stroke-width="1.9" fill="none"/></svg>
<div style="left:1230px;top:70px;width:15px;height:229px;background:#f0f0f0;"></div>
<div style="left:1231px;top:85px;width:13px;height:73px;background:#d9d9d9;"></div>
<svg style="position:absolute;left:1231px;top:73px" width="13" height="10" viewBox="0 0 13 10"><path d="M2.5 7l4-4 4 4" stroke="#555" stroke-width="1.1" fill="none"/></svg>
<svg style="position:absolute;left:1231px;top:285px" width="13" height="10" viewBox="0 0 13 10"><path d="M2.5 3l4 4 4-4" stroke="#555" stroke-width="1.1" fill="none"/></svg>
<div style="left:21px;top:299px;width:1224px;height:14px;background:#f0f0f0;"></div>
<div style="left:60px;top:299px;width:875px;height:14px;background:#dadada;"></div>
<svg style="position:absolute;left:47px;top:300px" width="10" height="12" viewBox="0 0 10 12"><path d="M6.5 2L2.5 6l4 4" stroke="#555" stroke-width="1.1" fill="none"/></svg>
<svg style="position:absolute;left:1217px;top:300px" width="10" height="12" viewBox="0 0 10 12"><path d="M3.5 2l4 4-4 4" stroke="#555" stroke-width="1.1" fill="none"/></svg>
<svg style="position:absolute;left:20px;top:314px" width="303" height="26" viewBox="0 0 303 26"><path d="M0.5 0V25.5H283L298.5 0.5" stroke="#c6c6c6" stroke-width="1" fill="none"/></svg>
<svg style="position:absolute;left:25px;top:320px;" width="17" height="15" viewBox="0 0 17 15" fill="none" stroke="#0a74ee" stroke-width="1.45" stroke-linecap="round" stroke-linejoin="round"><path d="M0.6 0.7h15.6L10 8.5v5.6L6.8 12.1V8.5z" stroke-width="1.5"/></svg>
<div style="left:48.5px;top:318px;width:230px;height:18.5px;border:1px solid #cbcbcb;border-radius:3px;background:#fff;"></div>
<div class="tx" style="left:52.5px;top:319.5px;height:17px;line-height:17px;font-style:italic;color:#6e6e6e;letter-spacing:-0.1px;">Digite aqui para buscar…</div>
<svg style="position:absolute;left:288.0px;top:323px" width="10" height="10" viewBox="0 0 10 10"><path d="M1 1l8 8M9 1L1 9" stroke="#8a8a8a" stroke-width="1.2"/></svg>
<div class="btn" style="left:20.5px;top:341px;width:98px;height:21px;background:#ffffff;"></div>
<div class="tx" style="left:59.5px;top:343.6px;height:17px;line-height:17px;color:#111;">Produto</div>
<svg style="position:absolute;left:44px;top:342.5px;" width="10" height="17" viewBox="0 0 10 17" fill="none" stroke="#0a74ee" stroke-width="1.45" stroke-linecap="round" stroke-linejoin="round"><path d="M3.3 1.2h3.4v3H3.3z" stroke-width="1.3"/><path d="M2.8 4.2h4.4c1.1 0 1.8.7 1.8 1.8v8.6c0 .9-.6 1.5-1.5 1.5H2.5c-.9 0-1.5-.6-1.5-1.5V6c0-1.1.7-1.8 1.8-1.8z" stroke-width="1.5"/><path d="M3.4 8.3h3.2M3.4 11.6h3.2" stroke-width="1.5"/></svg>
<div class="btn" style="left:119px;top:341px;width:99px;height:21px;background:#ffffff;"></div>
<div class="tx" style="left:154.5px;top:343.6px;height:17px;line-height:17px;color:#111;">Estrutura</div>
<svg style="position:absolute;left:136px;top:343px;" width="16" height="16" viewBox="0 0 16 16" fill="none" stroke="#0a74ee" stroke-width="1.45" stroke-linecap="round" stroke-linejoin="round"><path d="M1 3.2c0-.6.4-1 1-1h4c.6 0 1 .4 1 1v4.6" /><path d="M1 3.2V14.8c0 .5.4.9.9.9H13c.5 0 .8-.4.8-.9V9.8"/><path d="M1 9.2c1.2-1.6 2.3-1.6 3.2-.6.9 1 1.9 1 2.8 0 .8-.9 1.8-.9 2.6 0 .9 1 2 1 3.2.2"/><path d="M6.6 10.6c-1.2.9-1.2 2 0 2.9.7.6.7 1.4.3 2.2"/><path d="M9.3 1.6c0-.5.4-.8.8-.8h4.9c.5 0 .9.4.9.9v4.7c0 .5-.4.9-.9.9h-1.7l-1.8 1.2-1.6-1.6c.9-.9.9-1.8 0-2.6-.9-.8-.9-1.7 0-2.5z"/></svg>
<div class="btn" style="left:219px;top:341px;width:98px;height:21px;background:#ffffff;"></div>
<div class="tx" style="left:253px;top:343.6px;height:17px;line-height:17px;color:#111;">Utilização</div>
<svg style="position:absolute;left:234px;top:342px;" width="18" height="18" viewBox="0 0 18 18" fill="none" stroke="#0a74ee" stroke-width="1.45" stroke-linecap="round" stroke-linejoin="round"><circle cx="7.7" cy="7.5" r="6.2" stroke-width="1.4"/><path d="M11.9 11.8l5.3 5.1" stroke-width="1.5"/></svg>
<div class="btn" style="left:318px;top:341px;width:98px;height:21px;background:#ffffff;"></div>
<div class="tx" style="left:342px;top:343.6px;height:17px;line-height:17px;color:#111;">Detalhamento</div>
<svg style="position:absolute;left:323px;top:342px;" width="18" height="18" viewBox="0 0 18 18" fill="none" stroke="#0a74ee" stroke-width="1.45" stroke-linecap="round" stroke-linejoin="round"><circle cx="7.7" cy="7.5" r="6.2" stroke-width="1.4"/><path d="M11.9 11.8l5.3 5.1" stroke-width="1.5"/></svg>
<div class="btn" style="left:417px;top:341px;width:98px;height:21px;background:#ebebeb;"></div>
<div class="tx" style="left:440.5px;top:343.6px;height:17px;line-height:17px;color:#808080;">Hist.Demanda</div>
<svg style="position:absolute;left:423px;top:342.5px;opacity:.6" width="17" height="17" viewBox="0 0 17 17" fill="none" stroke="#0a74ee" stroke-width="1.45" stroke-linecap="round" stroke-linejoin="round"><path d="M2.6 4.2A7 7 0 1 1 2 11.2" stroke-width="1.4"/><path d="M1.8 1.5v3.6h3.6" stroke-width="1.4"/><path d="M7.8 5v3.8l1.8 2.2" stroke-width="1.4"/></svg>
<div class="btn" style="left:615.5px;top:341px;width:98px;height:21px;background:#ffffff;"></div>
<div class="tx" style="left:656.5px;top:343.6px;height:17px;line-height:17px;color:#111;">Origem</div>
<svg style="position:absolute;left:638px;top:344.5px;" width="16" height="14" viewBox="0 0 16 14" fill="none" stroke="#0a74ee" stroke-width="1.45" stroke-linecap="round" stroke-linejoin="round"><path d="M1.3 2.5v10.3h8" stroke-width="1.5"/><path d="M3.6 0.8h8.2v6.8" stroke-width="1.4"/><path d="M3.6 0.8v9.4h5.5" stroke-width="1.4"/><path d="M5.8 0.8v3.6h3.8V0.8" stroke-width="1.3"/><path d="M5.6 6.5h5" stroke-width="1.3"/><path d="M9.3 13l5.6-5.6" stroke-width="2.4"/></svg>
<div class="btn" style="left:714.5px;top:341px;width:98px;height:21px;background:#ffffff;"></div>
<div class="tx" style="left:742.5px;top:343.6px;height:17px;line-height:17px;color:#111;">Pos.Estoque</div>
<svg style="position:absolute;left:724px;top:344.5px;" width="16" height="14" viewBox="0 0 16 14" fill="none" stroke="#0a74ee" stroke-width="1.45" stroke-linecap="round" stroke-linejoin="round"><path d="M1 4.5v8.3h8" stroke-width="1.4"/><path d="M1 4.5L2.8 0.8h6.4L11 4.5H1z" stroke-width="1.4"/><path d="M6 0.8v3.7" stroke-width="1.3"/><circle cx="11" cy="9.5" r="2.7" stroke-width="1.4"/><path d="M12.9 11.6l2.3 2.2" stroke-width="1.5"/></svg>
<div class="tx" style="left:847.5px;top:339.5px;height:17px;line-height:17px;font-weight:bold;font-size:11.5px;">Seleção:</div>
<div class="btn" style="left:894.5px;top:340.5px;width:25.5px;height:21px;background:#ffffff;"></div>
<svg style="position:absolute;left:898.7px;top:343.7px;" width="16" height="15" viewBox="0 0 16 15" fill="none" stroke="#0a74ee" stroke-width="1.45" stroke-linecap="round" stroke-linejoin="round"><path d="M2.8 0.6h2.6M10.6 0.6h2.6" stroke-width="1.3"/><path d="M2.4 2.6h3.9v10.8H1c-.4 0-.6-.3-.6-.6V8.4z" stroke-width="1.4"/><path d="M13.6 2.6H9.7v10.8H15c.4 0 .6-.3.6-.6V8.4z" stroke-width="1.4"/><path d="M6.3 2.6h3.4M6.3 8.4h3.4" stroke-width="1.3"/></svg>
<div class="btn" style="left:922px;top:340.5px;width:25.5px;height:21px;background:#ffffff;"></div>
<svg style="position:absolute;left:926.2px;top:342.5px;" width="17" height="17" viewBox="0 0 17 17" fill="none" stroke="#0a74ee" stroke-width="1.45" stroke-linecap="round" stroke-linejoin="round"><path d="M3.6 15.6H1.6c-.6 0-1-.4-1-1V1.5c0-.6.4-1 1-1h4.8l4.8 4.8v3.4" stroke-width="1.4"/><path d="M6.4 0.5v4.8h4.8" stroke-width="1.3"/><text x="5" y="16.3" font-family="Liberation Sans" font-weight="bold" font-size="6.4" fill="#0a74ee" stroke="none" letter-spacing="-0.2">XLS</text></svg>
<div class="btn" style="left:949px;top:340.5px;width:25.5px;height:21px;background:#ffffff;"></div>
<svg style="position:absolute;left:953.2px;top:343.7px;" width="16" height="14" viewBox="0 0 16 14" fill="none" stroke="#0a74ee" stroke-width="1.45" stroke-linecap="round" stroke-linejoin="round"><path d="M4.5 0.3v12.6M1.2 9.6l3.3 3.3 3.3-3.3" stroke-width="1.4"/><path d="M9.3 5.6l2.2-5.2 2.2 5.2M10 4h3" stroke-width="1.4"/><path d="M9.5 7.4h4l-4 5.4h4.2" stroke-width="1.5"/></svg>
<div class="btn" style="left:976px;top:340.5px;width:25.5px;height:21px;background:#ffffff;"></div>
<svg style="position:absolute;left:980.2px;top:343.7px;" width="16" height="14" viewBox="0 0 16 14" fill="none" stroke="#0a74ee" stroke-width="1.45" stroke-linecap="round" stroke-linejoin="round"><rect x="0.7" y="0.7" width="14.6" height="12.6" rx="1.6" stroke-width="1.4"/><path d="M0.7 4.5h14.6M5.4 4.5v8.8" stroke-width="1.4"/></svg>
<div class="btn" style="left:1012.5px;top:340.5px;width:25.5px;height:21px;background:#ffffff;"></div>
<svg style="position:absolute;left:1017.1px;top:343.5px;" width="15" height="15" viewBox="0 0 15 15" fill="none" stroke="#0a74ee" stroke-width="1.45" stroke-linecap="round" stroke-linejoin="round"><rect x="1" y="1" width="13" height="13" rx="1.8" stroke-width="1.9"/><path d="M4.2 7.8l2.3 2 4-3.6" stroke-width="1.6"/></svg>
<div class="btn" style="left:1039.5px;top:340.5px;width:25.5px;height:21px;background:#ffffff;"></div>
<svg style="position:absolute;left:1044.1px;top:343.5px;" width="15" height="15" viewBox="0 0 15 15" fill="none" stroke="#0a74ee" stroke-width="1.45" stroke-linecap="round" stroke-linejoin="round"><rect x="1" y="1" width="13" height="13" rx="1.8" stroke-width="1.9"/></svg>
<div style="left:1005.5px;top:342px;width:1px;height:18px;background:#8a8a8a;"></div>
<div style="left:1069px;top:342px;width:1px;height:18px;background:#8a8a8a;"></div>
<div style="left:1096px;top:342px;width:1px;height:18px;background:#8a8a8a;"></div>
<div class="chk" style="left:1076px;top:344px;"></div>
<div class="btn" style="left:1102px;top:340.5px;width:89px;height:21px;background:#ffffff;"></div>
<div class="tx" style="left:1112.5px;top:343.1px;height:17px;line-height:17px;color:#111;">Exb.Demanda</div>
<div class="btn" style="left:1192.5px;top:340.5px;width:11.5px;height:21px;background:#ffffff;"></div>
<svg style="position:absolute;left:1195px;top:349px" width="6" height="5" viewBox="0 0 6 5"><path d="M1 1.5l2 2 2-2" stroke="#0a74ee" stroke-width="1.2" fill="none"/></svg>
<div class="btn" style="left:1210px;top:340.5px;width:26px;height:21px;background:#ffffff;"></div>
<svg style="position:absolute;left:1214.5px;top:344.5px;" width="17" height="15" viewBox="0 0 17 15" fill="none" stroke="#0a74ee" stroke-width="1.45" stroke-linecap="round" stroke-linejoin="round"><path d="M0.6 0.7h15.6L10 8.5v5.6L6.8 12.1V8.5z" stroke-width="1.5"/></svg>
<div class="btn" style="left:1237.5px;top:340.5px;width:11.5px;height:21px;background:#ffffff;"></div>
<svg style="position:absolute;left:1240px;top:349px" width="6" height="5" viewBox="0 0 6 5"><path d="M1 1.5l2 2 2-2" stroke="#0a74ee" stroke-width="1.2" fill="none"/></svg>
<div class="tx hd" style="left:20px;top:366px;height:17px;line-height:17px;">Planejamento por período</div>
<div class="tx hd" style="left:659.5px;top:366px;height:17px;line-height:17px;">Documentos de ressuprimento</div>
<div style="left:20px;top:384.5px;width:631px;height:152.5px;background:#fff;border:1px solid #c8c8c8;"></div>
<div style="left:21px;top:385.5px;width:629px;height:17.5px;background:#f0f0f0;"></div>
<div style="left:21px;top:402.5px;width:432px;height:1px;background:#c9c9c9;"></div>
<div style="left:44px;top:385.5px;width:1px;height:17px;background:#d6d6d6;"></div>
<div style="left:98.5px;top:385.5px;width:1px;height:17px;background:#d6d6d6;"></div>
<div style="left:158px;top:385.5px;width:1px;height:17px;background:#d6d6d6;"></div>
<div style="left:239px;top:385.5px;width:1px;height:17px;background:#d6d6d6;"></div>
<div style="left:310.5px;top:385.5px;width:1px;height:17px;background:#d6d6d6;"></div>
<div style="left:380.5px;top:385.5px;width:1px;height:17px;background:#d6d6d6;"></div>
<div style="left:453px;top:385.5px;width:1px;height:18px;background:#d6d6d6;"></div>
<div class="cell " style="left:20px;top:385.5px;width:24px;padding:0 2.5px 0 1.5px;"></div>
<div class="cell " style="left:44px;top:385.5px;width:54.5px;padding:0 2.5px 0 1.5px;">Período</div>
<div class="cell r" style="left:98.5px;top:385.5px;width:59.5px;padding:0 2.5px 0 1.5px;">Demanda</div>
<div class="cell r" style="left:158px;top:385.5px;width:81px;padding:0 2.5px 0 1.5px;">Est.Projetado</div>
<div class="cell r" style="left:239px;top:385.5px;width:71.5px;padding:0 2.5px 0 1.5px;">Receb.Prog</div>
<div class="cell r" style="left:310.5px;top:385.5px;width:70.0px;padding:0 2.5px 0 1.5px;">Receb.Plan</div>
<div class="cell r" style="left:380.5px;top:385.5px;width:72.5px;padding:0 2.5px 0 1.5px;">Ordens Plan</div>
<div style="left:45px;top:403.5px;width:408px;height:19.1px;background:#ececec;"></div>
<div class="cell " style="left:45px;top:403.50px;width:53.5px;height:17.5px;background:#f2f2f2;background:#3c3c3c;color:#fff;padding:1px 2.5px 0 1.5px;">Anterior</div>
<div class="cell r" style="left:99.5px;top:403.50px;width:58.5px;height:17.5px;background:#f2f2f2;padding:1px 2.5px 0 2px;">0,000</div>
<div class="cell r" style="left:159px;top:403.50px;width:80px;height:17.5px;background:#f2f2f2;padding:1px 2.5px 0 2px;">500,000</div>
<div class="cell r" style="left:240px;top:403.50px;width:70.5px;height:17.5px;background:#f2f2f2;padding:1px 2.5px 0 2px;">0,000</div>
<div class="cell r" style="left:311.5px;top:403.50px;width:69.0px;height:17.5px;background:#f2f2f2;padding:1px 2.5px 0 2px;">0,000</div>
<div class="cell r" style="left:381.5px;top:403.50px;width:71.5px;height:17.5px;background:#f2f2f2;padding:1px 2.5px 0 2px;">0,000</div>
<div style="left:21px;top:403.5px;width:22px;height:17.5px;background:#fff;"></div>
<div style="left:21px;top:421.0px;width:22px;height:1.6px;background:#d0d0d0;"></div>
<div class="chk" style="left:24.5px;top:405.30px;"></div>
<div style="left:45px;top:422.6px;width:408px;height:19.1px;background:#ececec;"></div>
<div class="cell " style="left:45px;top:422.60px;width:53.5px;height:17.5px;background:#ffffff;padding:1px 2.5px 0 1.5px;">07/2024</div>
<div class="cell r" style="left:99.5px;top:422.60px;width:58.5px;height:17.5px;background:#ffffff;padding:1px 2.5px 0 2px;">50,000</div>
<div class="cell r" style="left:159px;top:422.60px;width:80px;height:17.5px;background:#ffffff;padding:1px 2.5px 0 2px;">450,000</div>
<div class="cell r" style="left:240px;top:422.60px;width:70.5px;height:17.5px;background:#ffffff;padding:1px 2.5px 0 2px;">0,000</div>
<div class="cell r" style="left:311.5px;top:422.60px;width:69.0px;height:17.5px;background:#ffffff;padding:1px 2.5px 0 2px;">0,000</div>
<div class="cell r" style="left:381.5px;top:422.60px;width:71.5px;height:17.5px;background:#ffffff;padding:1px 2.5px 0 2px;">0,000</div>
<div style="left:21px;top:422.6px;width:22px;height:17.5px;background:#fff;"></div>
<div style="left:21px;top:440.1px;width:22px;height:1.6px;background:#d0d0d0;"></div>
<div class="chk" style="left:24.5px;top:424.40px;"></div>
<div style="left:45px;top:441.7px;width:408px;height:19.1px;background:#ececec;"></div>
<div class="cell " style="left:45px;top:441.70px;width:53.5px;height:17.5px;background:#aaaaaa;padding:1px 2.5px 0 1.5px;">08/2024</div>
<div class="cell r" style="left:99.5px;top:441.70px;width:58.5px;height:17.5px;background:#aaaaaa;padding:1px 2.5px 0 2px;">0,000</div>
<div class="cell r" style="left:159px;top:441.70px;width:80px;height:17.5px;background:#aaaaaa;padding:1px 2.5px 0 2px;">20.450,000</div>
<div class="cell r" style="left:240px;top:441.70px;width:70.5px;height:17.5px;background:#aaaaaa;padding:1px 2.5px 0 2px;">0,000</div>
<div class="cell r" style="left:311.5px;top:441.70px;width:69.0px;height:17.5px;background:#aaaaaa;background:#22ef9f;color:#2c4a3c;padding:1px 2.5px 0 2px;">20.000,000</div>
<div class="cell r" style="left:381.5px;top:441.70px;width:71.5px;height:17.5px;background:#aaaaaa;padding:1px 2.5px 0 2px;">20.000,000</div>
<div style="left:21px;top:441.7px;width:22px;height:17.5px;background:#fff;"></div>
<div style="left:21px;top:459.2px;width:22px;height:1.6px;background:#d0d0d0;"></div>
<div class="chk" style="left:24.5px;top:443.50px;"></div>
<svg style="position:absolute;left:24.5px;top:443.50px" width="14" height="14" viewBox="0 0 14 14"><path d="M3 7.4l2.5 3 5.3-7" stroke="#000" stroke-width="1.9" fill="none"/></svg>
<div style="left:45px;top:460.8px;width:408px;height:19.1px;background:#ececec;"></div>
<div class="cell " style="left:45px;top:460.80px;width:53.5px;height:17.5px;background:#ffffff;padding:1px 2.5px 0 1.5px;">09/2024</div>
<div class="cell r" style="left:99.5px;top:460.80px;width:58.5px;height:17.5px;background:#ffffff;padding:1px 2.5px 0 2px;">30,000</div>
<div class="cell r" style="left:159px;top:460.80px;width:80px;height:17.5px;background:#ffffff;padding:1px 2.5px 0 2px;">20.420,000</div>
<div class="cell r" style="left:240px;top:460.80px;width:70.5px;height:17.5px;background:#ffffff;padding:1px 2.5px 0 2px;">0,000</div>
<div class="cell r" style="left:311.5px;top:460.80px;width:69.0px;height:17.5px;background:#ffffff;padding:1px 2.5px 0 2px;">0,000</div>
<div class="cell r" style="left:381.5px;top:460.80px;width:71.5px;height:17.5px;background:#ffffff;padding:1px 2.5px 0 2px;">0,000</div>
<div style="left:21px;top:460.8px;width:22px;height:17.5px;background:#fff;"></div>
<div style="left:21px;top:478.3px;width:22px;height:1.6px;background:#d0d0d0;"></div>
<div class="chk" style="left:24.5px;top:462.60px;"></div>
<div style="left:45px;top:479.9px;width:408px;height:19.1px;background:#ececec;"></div>
<div class="cell " style="left:45px;top:479.90px;width:53.5px;height:17.5px;background:#f2f2f2;padding:1px 2.5px 0 1.5px;">Posterior</div>
<div class="cell r" style="left:99.5px;top:479.90px;width:58.5px;height:17.5px;background:#f2f2f2;padding:1px 2.5px 0 2px;">0,000</div>
<div class="cell r" style="left:159px;top:479.90px;width:80px;height:17.5px;background:#f2f2f2;padding:1px 2.5px 0 2px;">20.420,000</div>
<div class="cell r" style="left:240px;top:479.90px;width:70.5px;height:17.5px;background:#f2f2f2;padding:1px 2.5px 0 2px;">0,000</div>
<div class="cell r" style="left:311.5px;top:479.90px;width:69.0px;height:17.5px;background:#f2f2f2;padding:1px 2.5px 0 2px;">0,000</div>
<div class="cell r" style="left:381.5px;top:479.90px;width:71.5px;height:17.5px;background:#f2f2f2;padding:1px 2.5px 0 2px;">0,000</div>
<div style="left:21px;top:479.9px;width:22px;height:17.5px;background:#fff;"></div>
<div style="left:21px;top:497.4px;width:22px;height:1.6px;background:#d0d0d0;"></div>
<div class="chk" style="left:24.5px;top:481.70px;"></div>
<div style="left:45px;top:499.0px;width:408px;height:19.1px;background:#ececec;"></div>
<div class="cell " style="left:45px;top:499.00px;width:53.5px;height:17.5px;background:#ffffff;color:#8a8a8a;padding:1px 2.5px 0 1.5px;">Totais</div>
<div class="cell r" style="left:99.5px;top:499.00px;width:58.5px;height:17.5px;background:#ffffff;color:#8a8a8a;padding:1px 2.5px 0 2px;">80,000</div>
<div class="cell r" style="left:159px;top:499.00px;width:80px;height:17.5px;background:#ffffff;color:#8a8a8a;padding:1px 2.5px 0 2px;">20.420,000</div>
<div class="cell r" style="left:240px;top:499.00px;width:70.5px;height:17.5px;background:#ffffff;color:#8a8a8a;padding:1px 2.5px 0 2px;">0,000</div>
<div class="cell r" style="left:311.5px;top:499.00px;width:69.0px;height:17.5px;background:#ffffff;color:#8a8a8a;padding:1px 2.5px 0 2px;">20.000,000</div>
<div class="cell r" style="left:381.5px;top:499.00px;width:71.5px;height:17.5px;background:#ffffff;color:#8a8a8a;padding:1px 2.5px 0 2px;">20.000,000</div>
<div style="left:21px;top:499.0px;width:22px;height:17.5px;background:#fff;"></div>
<div style="left:21px;top:516.5px;width:22px;height:1.6px;background:#d0d0d0;"></div>
<div class="chk" style="left:24.5px;top:500.80px;background:#e8e8e8;border-color:#c6c6c6;"></div>
<div style="left:43px;top:403.5px;width:2px;height:115px;background:#cdcdcd;"></div>
<div style="left:660px;top:384.5px;width:586px;height:152.5px;background:#fff;border:1px solid #c8c8c8;"></div>
<div style="left:661px;top:385.5px;width:584px;height:17.5px;background:#f0f0f0;"></div>
<div style="left:661px;top:402.5px;width:431.5px;height:1px;background:#c9c9c9;"></div>
<div style="left:735.2px;top:385.5px;width:1px;height:17px;background:#d6d6d6;"></div>
<div style="left:806.2px;top:385.5px;width:1px;height:17px;background:#d6d6d6;"></div>
<div style="left:877.4px;top:385.5px;width:1px;height:17px;background:#d6d6d6;"></div>
<div style="left:948.1px;top:385.5px;width:1px;height:17px;background:#d6d6d6;"></div>
<div style="left:1019.2px;top:385.5px;width:1px;height:17px;background:#d6d6d6;"></div>
<div style="left:1092.5px;top:385.5px;width:1px;height:18px;background:#d6d6d6;"></div>
<div class="cell " style="left:660px;top:385.5px;width:75.20000000000005px;padding:0 2.5px 0 1.5px;">Documento</div>
<div class="cell " style="left:735.2px;top:385.5px;width:71.0px;padding:0 2.5px 0 1.5px;">Dt.Geração</div>
<div class="cell " style="left:806.2px;top:385.5px;width:71.19999999999993px;padding:0 2.5px 0 1.5px;">Dt.Entrega</div>
<div class="cell r" style="left:877.4px;top:385.5px;width:70.70000000000005px;padding:0 2.5px 0 1.5px;">Quantidade</div>
<div class="cell " style="left:948.1px;top:385.5px;width:71.10000000000002px;padding:0 2.5px 0 1.5px;">Fornecedor</div>
<div class="cell " style="left:1019.2px;top:385.5px;width:73.29999999999995px;padding:0 2.5px 0 1.5px;">Observação</div>
<div style="left:661px;top:403.5px;width:431.5px;height:17.5px;background:#f2f2f2;"></div>
<div class="cell " style="left:661px;top:403.5px;width:74.20000000000005px;height:17.5px;background:#3c3c3c;color:#fff;padding:1px 2.5px 0 2px;">Req.Compra</div>
<div class="cell " style="left:735.2px;top:403.5px;width:71.0px;height:17.5px;padding:1px 2.5px 0 3.5px;">29/08/2024</div>
<div class="cell " style="left:806.2px;top:403.5px;width:71.19999999999993px;height:17.5px;padding:1px 2.5px 0 3.5px;">31/08/2024</div>
<div class="cell r" style="left:877.4px;top:403.5px;width:70.70000000000005px;height:17.5px;padding:1px 2.5px 0 2px;">20.000,000</div>
<div class="cell " style="left:948.1px;top:403.5px;width:71.10000000000002px;height:17.5px;padding:1px 2.5px 0 3.5px;"></div>
<div class="cell " style="left:1019.2px;top:403.5px;width:73.29999999999995px;height:17.5px;padding:1px 2.5px 0 3.5px;"></div>
<div style="left:735.2px;top:403.5px;width:1px;height:17.5px;background:#ececec;"></div>
<div style="left:806.2px;top:403.5px;width:1px;height:17.5px;background:#ececec;"></div>
<div style="left:877.4px;top:403.5px;width:1px;height:17.5px;background:#ececec;"></div>
<div style="left:948.1px;top:403.5px;width:1px;height:17.5px;background:#ececec;"></div>
<div style="left:1019.2px;top:403.5px;width:1px;height:17.5px;background:#ececec;"></div>
<svg style="position:absolute;left:20px;top:537px" width="303" height="26" viewBox="0 0 303 26"><path d="M0.5 0V25.5H283L298.5 0.5" stroke="#c6c6c6" stroke-width="1" fill="none"/></svg>
<svg style="position:absolute;left:25px;top:542px;" width="17" height="15" viewBox="0 0 17 15" fill="none" stroke="#0a74ee" stroke-width="1.45" stroke-linecap="round" stroke-linejoin="round"><path d="M0.6 0.7h15.6L10 8.5v5.6L6.8 12.1V8.5z" stroke-width="1.5"/></svg>
<div style="left:48.5px;top:540px;width:230px;height:18.5px;border:1px solid #cbcbcb;border-radius:3px;background:#fff;"></div>
<div class="tx" style="left:52.5px;top:541.5px;height:17px;line-height:17px;font-style:italic;color:#6e6e6e;letter-spacing:-0.1px;">Digite aqui para buscar…</div>
<svg style="position:absolute;left:288.0px;top:545px" width="10" height="10" viewBox="0 0 10 10"><path d="M1 1l8 8M9 1L1 9" stroke="#8a8a8a" stroke-width="1.2"/></svg>
<svg style="position:absolute;left:660px;top:537px" width="305" height="26" viewBox="0 0 305 26"><path d="M0.5 0V25.5H285L300.5 0.5" stroke="#c6c6c6" stroke-width="1" fill="none"/></svg>
<svg style="position:absolute;left:665px;top:542px;" width="17" height="15" viewBox="0 0 17 15" fill="none" stroke="#0a74ee" stroke-width="1.45" stroke-linecap="round" stroke-linejoin="round"><path d="M0.6 0.7h15.6L10 8.5v5.6L6.8 12.1V8.5z" stroke-width="1.5"/></svg>
<div style="left:688.5px;top:540px;width:230px;height:18.5px;border:1px solid #cbcbcb;border-radius:3px;background:#fff;"></div>
<div class="tx" style="left:692.5px;top:541.5px;height:17px;line-height:17px;font-style:italic;color:#6e6e6e;letter-spacing:-0.1px;">Digite aqui para buscar…</div>
<svg style="position:absolute;left:928.0px;top:545px" width="10" height="10" viewBox="0 0 10 10"><path d="M1 1l8 8M9 1L1 9" stroke="#8a8a8a" stroke-width="1.2"/></svg>
<div class="btn" style="left:20.5px;top:563.5px;width:98px;height:21px;background:#ffffff;"></div>
<div class="tx" style="left:61.5px;top:566.1px;height:17px;line-height:17px;color:#111;">Cálculo</div>
<svg style="position:absolute;left:45px;top:565.8px;" width="12" height="16" viewBox="0 0 12 16" fill="none" stroke="#0a74ee" stroke-width="1.45" stroke-linecap="round" stroke-linejoin="round"><rect x="0.75" y="0.75" width="10.5" height="14.5" rx="1.4" stroke-width="1.5"/><path d="M0.75 4.6h10.5" stroke-width="1.4"/><g fill="#0a74ee" stroke="none" opacity="0.85"><rect x="2.1" y="6.1" width="1.9" height="1.9"/><rect x="5.05" y="6.1" width="1.9" height="1.9"/><rect x="8" y="6.1" width="1.9" height="1.9"/><rect x="2.1" y="9.1" width="1.9" height="1.9"/><rect x="5.05" y="9.1" width="1.9" height="1.9"/><rect x="8" y="9.1" width="1.9" height="1.9"/><rect x="2.1" y="12.1" width="4.85" height="1.9" rx="0.9"/><rect x="8" y="12.1" width="1.9" height="1.9"/></g></svg>
<div class="btn" style="left:119.5px;top:563.5px;width:98px;height:21px;background:#ffffff;"></div>
<div class="tx" style="left:143.5px;top:566.1px;height:17px;line-height:17px;color:#111;">Detalhamento</div>
<svg style="position:absolute;left:124.5px;top:564.5px;" width="18" height="18" viewBox="0 0 18 18" fill="none" stroke="#0a74ee" stroke-width="1.45" stroke-linecap="round" stroke-linejoin="round"><circle cx="7.7" cy="7.5" r="6.2" stroke-width="1.4"/><path d="M11.9 11.8l5.3 5.1" stroke-width="1.5"/></svg>
<div class="btn" style="left:543.5px;top:563.5px;width:25.5px;height:21px;background:#ffffff;"></div>
<svg style="position:absolute;left:547.8px;top:566.5px;" width="16" height="15" viewBox="0 0 16 15" fill="none" stroke="#0a74ee" stroke-width="1.45" stroke-linecap="round" stroke-linejoin="round"><path d="M2.8 0.6h2.6M10.6 0.6h2.6" stroke-width="1.3"/><path d="M2.4 2.6h3.9v10.8H1c-.4 0-.6-.3-.6-.6V8.4z" stroke-width="1.4"/><path d="M13.6 2.6H9.7v10.8H15c.4 0 .6-.3.6-.6V8.4z" stroke-width="1.4"/><path d="M6.3 2.6h3.4M6.3 8.4h3.4" stroke-width="1.3"/></svg>
<div class="btn" style="left:570.5px;top:563.5px;width:25.5px;height:21px;background:#ffffff;"></div>
<svg style="position:absolute;left:574.8px;top:565.5px;" width="17" height="17" viewBox="0 0 17 17" fill="none" stroke="#0a74ee" stroke-width="1.45" stroke-linecap="round" stroke-linejoin="round"><path d="M3.6 15.6H1.6c-.6 0-1-.4-1-1V1.5c0-.6.4-1 1-1h4.8l4.8 4.8v3.4" stroke-width="1.4"/><path d="M6.4 0.5v4.8h4.8" stroke-width="1.3"/><text x="5" y="16.3" font-family="Liberation Sans" font-weight="bold" font-size="6.4" fill="#0a74ee" stroke="none" letter-spacing="-0.2">XLS</text></svg>
<div class="btn" style="left:597.5px;top:563.5px;width:25.5px;height:21px;background:#ffffff;"></div>
<svg style="position:absolute;left:601.8px;top:566.5px;" width="16" height="14" viewBox="0 0 16 14" fill="none" stroke="#0a74ee" stroke-width="1.45" stroke-linecap="round" stroke-linejoin="round"><path d="M4.5 0.3v12.6M1.2 9.6l3.3 3.3 3.3-3.3" stroke-width="1.4"/><path d="M9.3 5.6l2.2-5.2 2.2 5.2M10 4h3" stroke-width="1.4"/><path d="M9.5 7.4h4l-4 5.4h4.2" stroke-width="1.5"/></svg>
<div class="btn" style="left:624.5px;top:563.5px;width:25.5px;height:21px;background:#ffffff;"></div>
<svg style="position:absolute;left:628.8px;top:566.5px;" width="16" height="14" viewBox="0 0 16 14" fill="none" stroke="#0a74ee" stroke-width="1.45" stroke-linecap="round" stroke-linejoin="round"><rect x="0.7" y="0.7" width="14.6" height="12.6" rx="1.6" stroke-width="1.4"/><path d="M0.7 4.5h14.6M5.4 4.5v8.8" stroke-width="1.4"/></svg>
<div class="btn" style="left:660.5px;top:563.5px;width:98px;height:21px;background:#ffffff;"></div>
<div class="tx" style="left:701.5px;top:566.1px;height:17px;line-height:17px;color:#111;">Alterar</div>
<svg style="position:absolute;left:683px;top:567px;" width="16" height="14" viewBox="0 0 16 14" fill="none" stroke="#0a74ee" stroke-width="1.45" stroke-linecap="round" stroke-linejoin="round"><path d="M1.3 2.5v10.3h8" stroke-width="1.5"/><path d="M3.6 0.8h8.2v6.8" stroke-width="1.4"/><path d="M3.6 0.8v9.4h5.5" stroke-width="1.4"/><path d="M5.8 0.8v3.6h3.8V0.8" stroke-width="1.3"/><path d="M5.6 6.5h5" stroke-width="1.3"/><path d="M9.3 13l5.6-5.6" stroke-width="2.4"/></svg>
<div class="btn" style="left:759.5px;top:563.5px;width:98px;height:21px;background:#ffffff;"></div>
<div class="tx" style="left:801.5px;top:566.1px;height:17px;line-height:17px;color:#111;">Validar</div>
<svg style="position:absolute;left:784.5px;top:568.5px;" width="14" height="12" viewBox="0 0 14 12" fill="none" stroke="#0a74ee" stroke-width="1.45" stroke-linecap="round" stroke-linejoin="round"><path d="M0.8 6.2l4 4.2L13.2 1" stroke-width="1.5"/></svg>
<div class="btn" style="left:976.5px;top:563.5px;width:97px;height:21px;background:#ffffff;"></div>
<div class="tx" style="left:1000px;top:566.1px;height:17px;line-height:17px;color:#111;">F10-Produtos</div>
<svg style="position:absolute;left:981.5px;top:567px;" width="17" height="15" viewBox="0 0 17 15" fill="none" stroke="#0a74ee" stroke-width="1.45" stroke-linecap="round" stroke-linejoin="round"><path d="M0.6 0.7h15.6L10 8.5v5.6L6.8 12.1V8.5z" stroke-width="1.5"/></svg>
<div class="btn" style="left:1075px;top:563.5px;width:25.5px;height:21px;background:#ffffff;"></div>
<svg style="position:absolute;left:1079.3px;top:566.5px;" width="16" height="15" viewBox="0 0 16 15" fill="none" stroke="#0a74ee" stroke-width="1.45" stroke-linecap="round" stroke-linejoin="round"><path d="M2.8 0.6h2.6M10.6 0.6h2.6" stroke-width="1.3"/><path d="M2.4 2.6h3.9v10.8H1c-.4 0-.6-.3-.6-.6V8.4z" stroke-width="1.4"/><path d="M13.6 2.6H9.7v10.8H15c.4 0 .6-.3.6-.6V8.4z" stroke-width="1.4"/><path d="M6.3 2.6h3.4M6.3 8.4h3.4" stroke-width="1.3"/></svg>
<div class="btn" style="left:1102.5px;top:563.5px;width:25.5px;height:21px;background:#ffffff;"></div>
<svg style="position:absolute;left:1106.8px;top:565.5px;" width="17" height="17" viewBox="0 0 17 17" fill="none" stroke="#0a74ee" stroke-width="1.45" stroke-linecap="round" stroke-linejoin="round"><path d="M3.6 15.6H1.6c-.6 0-1-.4-1-1V1.5c0-.6.4-1 1-1h4.8l4.8 4.8v3.4" stroke-width="1.4"/><path d="M6.4 0.5v4.8h4.8" stroke-width="1.3"/><text x="5" y="16.3" font-family="Liberation Sans" font-weight="bold" font-size="6.4" fill="#0a74ee" stroke="none" letter-spacing="-0.2">XLS</text></svg>
<div class="btn" style="left:1130px;top:563.5px;width:25.5px;height:21px;background:#ffffff;"></div>
<svg style="position:absolute;left:1134.3px;top:566.5px;" width="16" height="14" viewBox="0 0 16 14" fill="none" stroke="#0a74ee" stroke-width="1.45" stroke-linecap="round" stroke-linejoin="round"><path d="M4.5 0.3v12.6M1.2 9.6l3.3 3.3 3.3-3.3" stroke-width="1.4"/><path d="M9.3 5.6l2.2-5.2 2.2 5.2M10 4h3" stroke-width="1.4"/><path d="M9.5 7.4h4l-4 5.4h4.2" stroke-width="1.5"/></svg>
<div class="btn" style="left:1157px;top:563.5px;width:25.5px;height:21px;background:#ffffff;"></div>
<svg style="position:absolute;left:1161.3px;top:566.5px;" width="16" height="14" viewBox="0 0 16 14" fill="none" stroke="#0a74ee" stroke-width="1.45" stroke-linecap="round" stroke-linejoin="round"><rect x="0.7" y="0.7" width="14.6" height="12.6" rx="1.6" stroke-width="1.4"/><path d="M0.7 4.5h14.6M5.4 4.5v8.8" stroke-width="1.4"/></svg>
<div class="btn" style="left:841px;top:585.5px;width:25.5px;height:21px;background:#ffffff;"></div>
<svg style="position:absolute;left:845.5px;top:590px;" width="16" height="11" viewBox="0 0 16 11" fill="none" stroke="#0a74ee" stroke-width="1.45" stroke-linecap="round" stroke-linejoin="round"><rect x="0.8" y="0.8" width="14.4" height="9.4" rx="1.2" stroke-width="1.5"/><path d="M3 3.2h.8M5.5 3.2h.8M8 3.2h.8M10.5 3.2h.8M12.4 3.2h.6M3 5.7h.8M5.5 5.7h.8M8 5.7h.8M10.5 5.7h.8M12.4 5.7h.6M3 8h.6M5 8h6M12.4 8h.6" stroke-width="1.3"/></svg>
<div style="left:870.5px;top:587px;width:1px;height:18px;background:#8a8a8a;"></div>
<div class="btn" style="left:877px;top:585.5px;width:98px;height:21px;background:#ffffff;"></div>
<div class="tx" style="left:905px;top:588.1px;height:17px;line-height:17px;color:#111;">F5-Atualizar</div>
<svg style="position:absolute;left:888px;top:588.8px;" width="15" height="15" viewBox="0 0 15 15" fill="none" stroke="#0a74ee" stroke-width="1.45" stroke-linecap="round" stroke-linejoin="round"><path d="M13 4.2A6.2 6.2 0 0 0 1.6 6" stroke-width="1.5"/><path d="M2 10.8A6.2 6.2 0 0 0 13.4 9" stroke-width="1.5"/><path d="M13.8 0.8v3.8H10" stroke-width="1.6"/><path d="M1.2 14.2v-3.8H5" stroke-width="1.6"/></svg>
<div class="btn" style="left:1147px;top:585.5px;width:98.5px;height:40px;background:#ffffff;"></div>
<div class="tx" style="left:1196.5px;top:597px;height:17px;line-height:17px;color:#111;">Sair</div>
<div style="left:1197px;top:610.2px;width:7px;height:1px;background:#222;"></div>
<svg style="position:absolute;left:1178px;top:598px;" width="16" height="14" viewBox="0 0 16 14" fill="none" stroke="#0a74ee" stroke-width="1.45" stroke-linecap="round" stroke-linejoin="round"><path d="M5.5 0.8H1.8c-.6 0-1 .4-1 1v10.4c0 .6.4 1 1 1h3.7" stroke-width="1.5"/><path d="M6 5h4V2.2L15 7l-5 4.8V9H6z" stroke-width="1.5"/></svg>
<div class="btn" style="left:20.5px;top:607.5px;width:98px;height:21px;background:#ffffff;"></div>
<svg style="position:absolute;left:32.5px;top:611.5px;" width="17" height="13" viewBox="0 0 17 13" fill="none" stroke="#0a74ee" stroke-width="1.45" stroke-linecap="round" stroke-linejoin="round"><path d="M3.2 9.5V1.6c0-.5.4-.9.9-.9h8.2c.5 0 .9.4.9.9v7.9" stroke-width="1.4"/><path d="M5.6 5l2 1.8 3.2-3" stroke-width="1.5"/><path d="M0.8 9.5h15.4v2.8H0.8z" stroke-width="1.4"/></svg>
<div class="btn" style="left:120px;top:607.5px;width:97.5px;height:21px;background:#ffffff;"></div>
<svg style="position:absolute;left:134px;top:609.8px;" width="14" height="17" viewBox="0 0 14 17" fill="none" stroke="#0a74ee" stroke-width="1.45" stroke-linecap="round" stroke-linejoin="round"><path d="M8.4 0.8H2c-.7 0-1.2.5-1.2 1.2v12.8c0 .7.5 1.2 1.2 1.2h9.4c.7 0 1.2-.5 1.2-1.2V5z" stroke-width="1.4"/><path d="M8.4 0.8V5h4.2" stroke-width="1.3"/><path d="M4 10.2l1.9 1.8 3.4-3.4" stroke-width="1.5"/></svg>
<div class="btn" style="left:219px;top:607.5px;width:98px;height:21px;background:#ffffff;"></div>
<svg style="position:absolute;left:233.5px;top:609.5px;" width="17" height="17" viewBox="0 0 17 17" fill="none" stroke="#0a74ee" stroke-width="1.45" stroke-linecap="round" stroke-linejoin="round"><path d="M3.6 15.6H1.6c-.6 0-1-.4-1-1V1.5c0-.6.4-1 1-1h4.8l4.8 4.8v3.4" stroke-width="1.4"/><path d="M6.4 0.5v4.8h4.8" stroke-width="1.3"/><text x="5" y="16.3" font-family="Liberation Sans" font-weight="bold" font-size="6.4" fill="#0a74ee" stroke="none" letter-spacing="-0.2">XLS</text></svg>
<div class="tx" style="left:51.5px;top:611.1px;height:17px;line-height:17px;color:#111;">Dados doc.</div>
<div class="tx" style="left:151px;top:611.1px;height:17px;line-height:17px;color:#111;">Gerar doc.</div>
<div class="tx" style="left:252px;top:611.1px;height:17px;line-height:17px;color:#111;">Relatórios</div>
</body></html>
